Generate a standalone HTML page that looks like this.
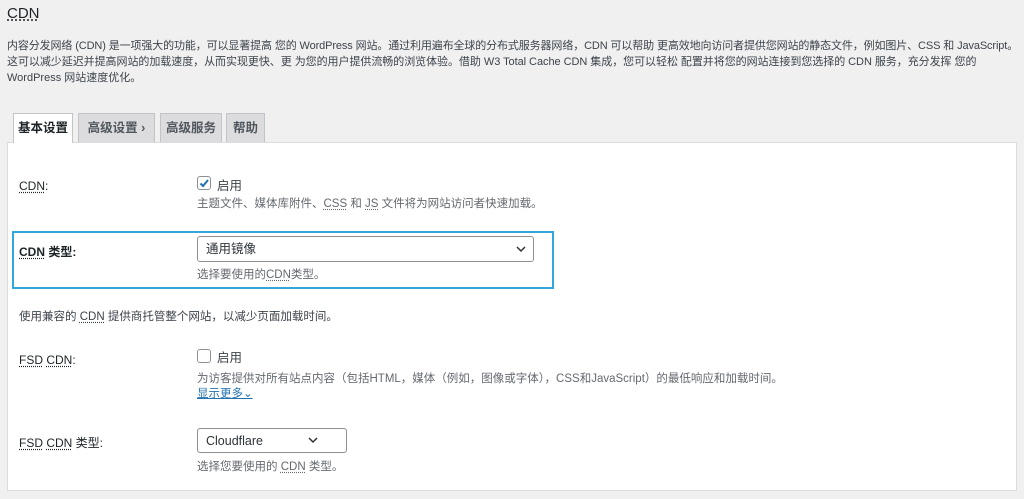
<!DOCTYPE html><html><head><meta charset="utf-8"><style>
body{margin:0;width:1024px;height:499px;background:#f0f0f1;font-family:"Liberation Sans","Noto Sans CJK SC",sans-serif;color:#3c434a;font-size:11px;position:relative;overflow:hidden}
.a{position:absolute;white-space:nowrap}
abbr{text-decoration:underline dotted;text-underline-offset:2px}
.tab{position:absolute;top:113px;height:29px;background:#dcdcde;border:1px solid #c3c4c7;border-bottom:none;box-sizing:border-box;font-size:12.5px;font-weight:bold;color:#50575e;line-height:28px;text-align:center}
.lbl{font-size:12px;color:#1d2327}
.sel{position:absolute;background:#fff;border:1px solid #8c8f94;border-radius:3px;box-sizing:border-box;font-size:12.5px;color:#2c3338;line-height:24px;padding-left:8px}
.cb{position:absolute;width:14px;height:14px;border:1px solid #8c8f94;border-radius:3px;background:#fff;box-sizing:border-box}
.hint{color:#646970;font-size:11.5px}
</style></head><body>
<div class="a" style="left:7px;top:5px;font-size:15px;color:#1d2327"><abbr>CDN</abbr></div>
<div class="a" style="left:7px;top:38px;font-size:11px;color:#3c434a;line-height:16px;letter-spacing:-0.12px">内容分发网络 (CDN) 是一项强大的功能，可以显著提高 您的 WordPress 网站。通过利用遍布全球的分布式服务器网络，CDN 可以帮助 更高效地向访问者提供您网站的静态文件，例如图片、CSS 和 JavaScript。</div>
<div class="a" style="left:7px;top:54px;font-size:11px;color:#3c434a;line-height:16px;letter-spacing:-0.05px">这可以减少延迟并提高网站的加载速度，从而实现更快、更 为您的用户提供流畅的浏览体验。借助 W3 Total Cache CDN 集成，您可以轻松 配置并将您的网站连接到您选择的 CDN 服务，充分发挥 您的</div>
<div class="a" style="left:7px;top:70px;font-size:11px;color:#3c434a;line-height:16px">WordPress 网站速度优化。</div>
<div style="position:absolute;left:7px;top:142px;width:1010px;height:349px;background:#fff;border:1px solid #dcdcde;box-sizing:border-box"></div>
<div class="tab" style="left:13px;width:60px;background:#fff;color:#1d2327;height:30px">基本设置</div>
<div class="tab" style="left:78px;width:77px">高级设置 ›</div>
<div class="tab" style="left:160px;width:62px">高级服务</div>
<div class="tab" style="left:226px;width:39px">帮助</div>
<div class="a lbl" style="left:19px;top:179px"><abbr>CDN</abbr>:</div>
<div class="cb" style="left:197px;top:176px"></div>
<svg class="a" style="left:198px;top:177px" width="12" height="12"><path d="M2.5 6.5l2.5 2.5 5-6" stroke="#2271b1" stroke-width="2" fill="none"/></svg>
<div class="a" style="left:217px;top:175px;font-size:12.5px">启用</div>
<div class="a hint" style="left:197px;top:195px">主题文件、媒体库附件、<abbr>CSS</abbr> 和 <abbr>JS</abbr> 文件将为网站访问者快速加载。</div>
<div style="position:absolute;left:12px;top:231px;width:542px;height:58px;border:2px solid #33a6dd;box-sizing:border-box"></div>
<div class="a lbl" style="left:19px;top:243px;font-weight:bold"><abbr>CDN</abbr> 类型:</div>
<div class="sel" style="left:197px;top:236px;width:337px;height:26px">通用镜像</div>
<svg class="a" style="left:516px;top:245px" width="10" height="8"><path d="M1 2l4 4 4-4" stroke="#2c3338" stroke-width="1.5" fill="none"/></svg>
<div class="a hint" style="left:197px;top:266px">选择要使用的<abbr>CDN</abbr>类型。</div>
<div class="a hint" style="left:19px;top:308px;color:#3c434a">使用兼容的 <abbr>CDN</abbr> 提供商托管整个网站，以减少页面加载时间。</div>
<div class="a lbl" style="left:19px;top:353px"><abbr>FSD</abbr> <abbr>CDN</abbr>:</div>
<div class="cb" style="left:197px;top:349px"></div>
<div class="a" style="left:217px;top:347px;font-size:12.5px">启用</div>
<div class="a hint" style="left:197px;top:370px">为访客提供对所有站点内容（包括HTML，媒体（例如，图像或字体），CSS和JavaScript）的最低响应和加载时间。</div>
<div class="a" style="left:197px;top:385px;color:#2271b1;text-decoration:underline;font-size:11.5px">显示更多⌄</div>
<div class="a lbl" style="left:19px;top:434px"><abbr>FSD</abbr> <abbr>CDN</abbr> 类型:</div>
<div class="sel" style="left:197px;top:428px;width:150px;height:25px">Cloudflare</div>
<svg class="a" style="left:308px;top:436px" width="10" height="8"><path d="M1 2l4 4 4-4" stroke="#2c3338" stroke-width="1.5" fill="none"/></svg>
<div class="a hint" style="left:197px;top:458px">选择您要使用的 <abbr>CDN</abbr> 类型。</div>
</body></html>
